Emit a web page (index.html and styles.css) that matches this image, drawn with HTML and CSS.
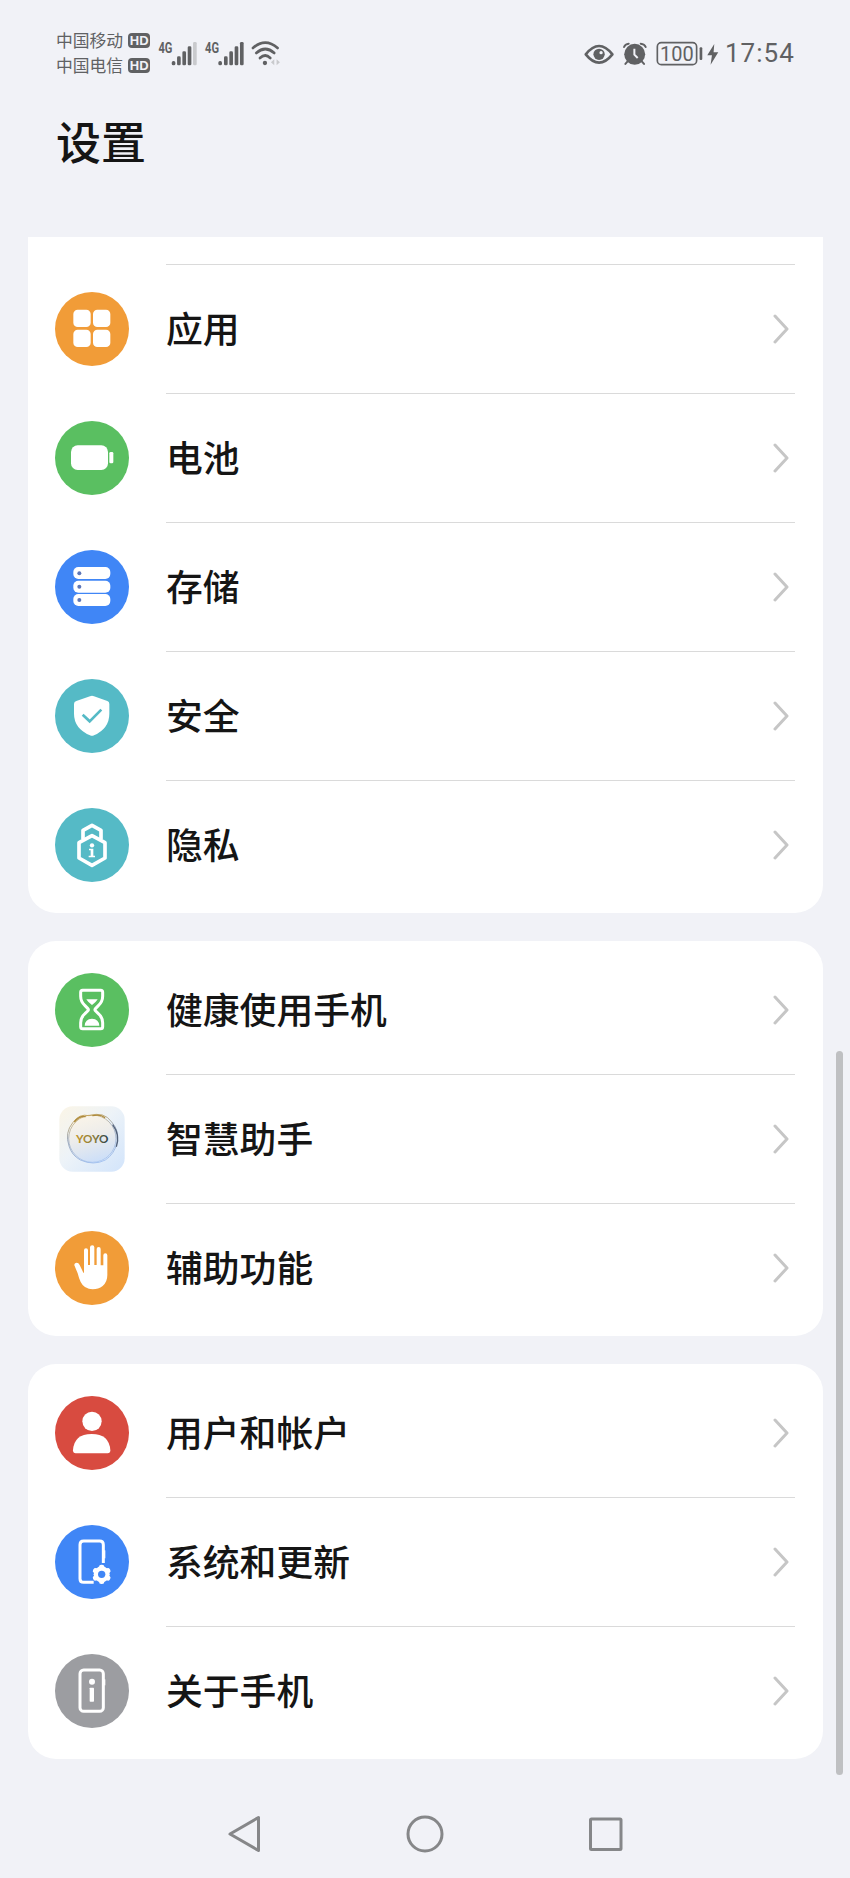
FILE: index.html
```html
<!DOCTYPE html>
<html lang="zh-CN">
<head>
  <meta charset="UTF-8" />
  <meta name="viewport" content="width=device-width, initial-scale=1.0"/>
  <title>设置</title>
  <link rel="stylesheet" href="styles.css">
</head>
<body>
  <div class="status-bar">
    <div class="carriers">
      <div class="carrier">中国移动<span class="hd">HD</span></div>
      <div class="carrier">中国电信<span class="hd">HD</span></div>
    </div>
    <svg class="signals" viewBox="350 55 375 85" fill="#606163">
      <text x="354" y="97" font-size="44" textLength="42" lengthAdjust="spacingAndGlyphs">4G</text>
      <rect x="394" y="121" width="11" height="13" rx="5"/>
      <rect x="410" y="107" width="11" height="27" rx="4"/>
      <rect x="426" y="92" width="11" height="42" rx="4"/>
      <rect x="442" y="77" width="11" height="57" rx="4"/>
      <rect x="458" y="64" width="11" height="70" rx="4" fill="#c9cacd"/>
      <text x="494" y="97" font-size="44" textLength="42" lengthAdjust="spacingAndGlyphs">4G</text>
      <rect x="534" y="121" width="11" height="13" rx="5"/>
      <rect x="551" y="107" width="11" height="27" rx="4"/>
      <rect x="567" y="92" width="11" height="42" rx="4"/>
      <rect x="583" y="77" width="11" height="57" rx="4"/>
      <rect x="599" y="64" width="11" height="70" rx="4"/>
      <g fill="none" stroke="#606163" stroke-width="8" stroke-linecap="round">
        <path d="M638 82Q675 50 712 82"/>
        <path d="M648 97Q675 73 702 97"/>
        <path d="M659 112Q675 97 690 112"/>
      </g>
      <circle cx="674" cy="127" r="6.5"/>
      <path d="M702 116v18l-10-9zM709 116v18l10-9z" fill="#c9cacd"/>
    </svg>
    <svg class="indicators" viewBox="40 55 410 85" fill="#606163">
      <path d="M48 101Q88 51 128 101Q88 151 48 101z" fill="none" stroke="#606163" stroke-width="8" stroke-linejoin="round"/>
      <circle cx="88" cy="101" r="17"/>
      <circle cx="94" cy="96" r="5" fill="#f1f2f7"/>
      <circle cx="195" cy="101" r="31.5"/>
      <g fill="none" stroke="#606163" stroke-width="6" stroke-linecap="round">
        <path d="M163 79Q166 70 177 69M213 69Q225 70 228 79M173 123l-6 7M217 123l6 7"/>
      </g>
      <path d="M194 84v18l10 10" fill="none" stroke="#f1f2f7" stroke-width="6"/>
      <rect x="263" y="66" width="118" height="66" rx="12" fill="none" stroke="#606163" stroke-width="5"/>
      <text x="271" y="121" font-size="60" textLength="101" lengthAdjust="spacingAndGlyphs">100</text>
      <rect x="390" y="80" width="8" height="38" rx="3"/>
      <path d="M434 70L413 104H427L423 132L446 95H432z"/>
    </svg>
    <span class="clock">17:54</span>
  </div>

  <h1 class="title">设置</h1>

  <div class="settings">
    <div class="card card-cut">
      <div class="row">
        <svg class="icon" viewBox="0 0 222 222">
          <circle cx="111" cy="111" r="111" fill="#f19c38"/>
          <g fill="#fff">
            <rect x="55" y="53" width="52" height="52" rx="13"/>
            <rect x="114" y="53" width="52" height="52" rx="13"/>
            <rect x="55" y="113" width="52" height="52" rx="13"/>
            <rect x="114" y="113" width="52" height="52" rx="13"/>
          </g>
        </svg>
        <div class="item"><span>应用</span><svg class="arrow" viewBox="0 0 18 30"><path d="M3 2L15 15L3 28"/></svg></div>
      </div>
      <div class="row">
        <svg class="icon" viewBox="0 0 222 222">
          <circle cx="111" cy="111" r="111" fill="#5abf61"/>
          <rect x="48" y="73" width="111" height="74" rx="20" fill="#fff"/>
          <rect x="163" y="93" width="12" height="34" rx="4" fill="#fff"/>
        </svg>
        <div class="item"><span>电池</span><svg class="arrow" viewBox="0 0 18 30"><path d="M3 2L15 15L3 28"/></svg></div>
      </div>
      <div class="row">
        <svg class="icon" viewBox="0 0 222 222">
          <circle cx="111" cy="111" r="111" fill="#4086f6"/>
          <g fill="#fff">
            <rect x="55" y="51" width="111" height="36" rx="15"/>
            <rect x="55" y="92" width="111" height="36" rx="15"/>
            <rect x="55" y="132" width="111" height="36" rx="15"/>
          </g>
          <g fill="#5d76b8">
            <circle cx="73" cy="70" r="6"/>
            <circle cx="73" cy="110" r="6"/>
            <circle cx="73" cy="150" r="6"/>
          </g>
        </svg>
        <div class="item"><span>存储</span><svg class="arrow" viewBox="0 0 18 30"><path d="M3 2L15 15L3 28"/></svg></div>
      </div>
      <div class="row">
        <svg class="icon" viewBox="0 0 222 222">
          <circle cx="111" cy="111" r="111" fill="#55bac6"/>
          <path d="M105 52Q111 49 117 52L157 66Q163 68 163 75V104Q163 148 117 169Q111 172 105 169Q57 148 57 104V75Q57 68 64 66z" fill="#fff"/>
          <path d="M83 107L104 127L139 92" fill="none" stroke="#55bac6" stroke-width="8"/>
        </svg>
        <div class="item"><span>安全</span><svg class="arrow" viewBox="0 0 18 30"><path d="M3 2L15 15L3 28"/></svg></div>
      </div>
      <div class="row">
        <svg class="icon" viewBox="0 0 222 222">
          <circle cx="111" cy="111" r="111" fill="#55bac6"/>
          <g fill="none" stroke="#fff" stroke-width="11" stroke-linejoin="round">
            <path d="M84 94V67L111 52L138 67V94"/>
            <path d="M72 104L111 83L150 104V150L111 172L72 150z"/>
          </g>
          <circle cx="111" cy="112" r="6.5" fill="#fff"/>
          <path d="M102 122H115V143H120V148H101V143H107V127H102z" fill="#fff"/>
        </svg>
        <div class="item"><span>隐私</span><svg class="arrow" viewBox="0 0 18 30"><path d="M3 2L15 15L3 28"/></svg></div>
      </div>
    </div>

    <div class="card">
      <div class="row">
        <svg class="icon" viewBox="0 0 222 222">
          <circle cx="111" cy="111" r="111" fill="#5abf61"/>
          <path d="M83 52H137Q143 52 143 58V70Q143 86 130 98L122 106Q118 110 122 114L130 122Q143 133 143 149V161Q143 167 137 167H83Q77 167 77 161V149Q77 133 90 122L98 114Q102 110 98 106L90 98Q77 86 77 70V58Q77 52 83 52z" fill="none" stroke="#fff" stroke-width="9"/>
          <path d="M94 79H128Q125 85 111 96Q97 85 94 79zM89 158Q90 138 111 137Q132 138 133 158z" fill="#fff"/>
        </svg>
        <div class="item"><span>健康使用手机</span><svg class="arrow" viewBox="0 0 18 30"><path d="M3 2L15 15L3 28"/></svg></div>
      </div>
      <div class="row">
        <svg class="icon" viewBox="0 0 222 222">
          <defs>
            <linearGradient id="tile" x1="0" y1="0" x2="1" y2="1">
              <stop offset="0" stop-color="#fbf5e6"/>
              <stop offset="0.45" stop-color="#edf3f8"/>
              <stop offset="1" stop-color="#d2e4fb"/>
            </linearGradient>
            <linearGradient id="ring" x1="0.3" y1="0" x2="0.6" y2="1">
              <stop offset="0" stop-color="#c69f4a"/>
              <stop offset="0.4" stop-color="#8f9cb0"/>
              <stop offset="1" stop-color="#9bbcef"/>
            </linearGradient>
            <linearGradient id="ball" x1="0.2" y1="0" x2="0.5" y2="1">
              <stop offset="0" stop-color="#fbf5e8"/>
              <stop offset="0.5" stop-color="#ececeb"/>
              <stop offset="1" stop-color="#cddff8"/>
            </linearGradient>
            <linearGradient id="yoyo">
              <stop offset="0" stop-color="#c29428"/>
              <stop offset="0.6" stop-color="#877b3c"/>
              <stop offset="1" stop-color="#263b46"/>
            </linearGradient>
          </defs>
          <rect x="13" y="13" width="196" height="196" rx="40" fill="url(#tile)"/>
          <circle cx="112" cy="110" r="71" fill="url(#ball)" stroke="url(#ring)" stroke-width="2"/>
          <path d="M42 132Q28 92 54 61Q73 34 102 41Q147 27 170 60Q195 88 186 123Q178 156 151 174Q116 192 76 174Q50 160 42 132z" fill="none" stroke="url(#ring)" stroke-width="2.5"/>
          <path d="M173 68Q196 99 184 134" fill="none" stroke="#526078" stroke-width="4"/>
          <path d="M58 60Q72 41 92 44M112 41Q137 36 150 47" fill="none" stroke="#ae8b3d" stroke-width="4"/>
          <text class="yoyo" x="63" y="123" font-size="35" textLength="97" lengthAdjust="spacingAndGlyphs" fill="url(#yoyo)">YOYO</text>
        </svg>
        <div class="item"><span>智慧助手</span><svg class="arrow" viewBox="0 0 18 30"><path d="M3 2L15 15L3 28"/></svg></div>
      </div>
      <div class="row">
        <svg class="icon" viewBox="0 0 222 222">
          <circle cx="111" cy="111" r="111" fill="#f19c38"/>
          <path d="M87 125V58Q87 52 93 52Q99 52 99 58V102H105V49Q105 43 112 43Q118 43 118 49V102H125V54Q125 48 131 48Q137 48 137 54V103H145V73Q145 67 151 67Q157 67 157 73V132Q157 153 143 165Q130 175 113 175Q88 175 77 153Q72 143 68 127L59 105Q56 98 62 96Q70 94 74 102L85 125z" fill="#fff"/>
        </svg>
        <div class="item"><span>辅助功能</span><svg class="arrow" viewBox="0 0 18 30"><path d="M3 2L15 15L3 28"/></svg></div>
      </div>
    </div>

    <div class="card">
      <div class="row">
        <svg class="icon" viewBox="0 0 222 222">
          <circle cx="111" cy="111" r="111" fill="#d84b40"/>
          <circle cx="111" cy="76" r="29" fill="#fff"/>
          <path d="M62 172Q54 172 54 163Q57 114 110 114Q163 114 166 163Q166 172 158 172z" fill="#fff"/>
        </svg>
        <div class="item"><span>用户和帐户</span><svg class="arrow" viewBox="0 0 18 30"><path d="M3 2L15 15L3 28"/></svg></div>
      </div>
      <div class="row">
        <svg class="icon" viewBox="0 0 222 222">
          <circle cx="111" cy="111" r="111" fill="#4086f6"/>
          <path d="M116 172H86Q75 172 75 161V59Q75 48 86 48H134Q145 48 145 59V114" fill="none" stroke="#fff" stroke-width="9"/>
          <path d="M148 76V100" stroke="#fff" stroke-width="6"/>
          <g fill="#fff">
            <circle cx="140" cy="148" r="24"/>
            <rect x="132" y="119" width="16" height="58" rx="7"/>
            <rect x="132" y="119" width="16" height="58" rx="7" transform="rotate(60 140 148)"/>
            <rect x="132" y="119" width="16" height="58" rx="7" transform="rotate(120 140 148)"/>
          </g>
          <circle cx="140" cy="148" r="11" fill="#4086f6"/>
        </svg>
        <div class="item"><span>系统和更新</span><svg class="arrow" viewBox="0 0 18 30"><path d="M3 2L15 15L3 28"/></svg></div>
      </div>
      <div class="row">
        <svg class="icon" viewBox="0 0 222 222">
          <circle cx="111" cy="111" r="111" fill="#9c9da1"/>
          <rect x="75" y="48" width="70" height="124" rx="11" fill="none" stroke="#fff" stroke-width="9"/>
          <path d="M148 76V94" stroke="#fff" stroke-width="6"/>
          <circle cx="111" cy="83" r="9" fill="#fff"/>
          <rect x="104" y="101" width="13" height="42" rx="2" fill="#fff"/>
        </svg>
        <div class="item"><span>关于手机</span><svg class="arrow" viewBox="0 0 18 30"><path d="M3 2L15 15L3 28"/></svg></div>
      </div>
    </div>
  </div>

  <div class="scrollbar"></div>

  <div class="nav-bar">
    <svg viewBox="0 0 40 40"><path d="M34.500 3.500V36.500L6 20z"/></svg>
    <svg viewBox="0 0 40 40"><circle cx="20" cy="20" r="17"/></svg>
    <svg viewBox="0 0 40 40"><rect x="4.500" y="5" width="30.500" height="30.500" rx="1"/></svg>
  </div>
</body>
</html>
```
FILE: styles.css
```css
* {
  box-sizing: border-box;
}
body {
  position: relative;
  margin: 0;
  width: 850px;
  height: 1878px;
  overflow: hidden;
  background-color: #f1f2f7;
  color: #151515;
  font-family: "Noto Sans CJK SC", sans-serif;
}
svg {
  display: block;
  flex: none;
}

/* status bar */
.status-bar {
  display: flex;
  align-items: center;
  height: 80px;
  padding: 26px 54px 0 56px;
  color: #606163;
}
.carriers {
  width: 95px;
}
.carrier {
  display: flex;
  align-items: center;
  gap: 5px;
  height: 25.500px;
  font-size: 16.800px;
  line-height: 25.500px;
  white-space: nowrap;
}
.hd {
  width: 22px;
  height: 15px;
  border-radius: 4px;
  background-color: #606163;
  color: #f1f2f7;
  font: bold 13px/15px "Liberation Sans", sans-serif;
  text-align: center;
}
.signals {
  width: 125px;
  height: 28.300px;
  margin-left: 5.700px;
  font-family: Roboto, sans-serif;
  font-weight: bold;
}
.indicators {
  width: 136.700px;
  height: 28.300px;
  margin-left: auto;
  font-family: Roboto, sans-serif;
}
.clock {
  width: 71px;
  margin-left: 5px;
  font: 26px/30px Roboto, sans-serif;
  letter-spacing: 1px;
  white-space: nowrap;
}

.title {
  height: 157px;
  margin: 0;
  padding: 28px 0 0 56px;
  font-size: 45px;
  font-weight: 500;
  line-height: 66px;
}

/* setting groups */
.settings {
  display: flex;
  flex-direction: column;
  gap: 28px;
  padding: 0 27.500px;
}
.card {
  padding: 4.200px 27.500px;
  border-radius: 28px;
  background-color: #fff;
}
.card-cut {
  padding-top: 27.400px;
  border-radius: 0 0 28px 28px;
}
.row {
  display: flex;
  align-items: center;
  gap: 37px;
  height: 128.860px;
}
.icon {
  width: 74px;
  height: 74px;
  margin-top: 1px;
}
.item {
  display: flex;
  flex: 1;
  align-items: center;
  justify-content: space-between;
  height: 100%;
  padding-right: 5.500px;
  border-top: 1px solid #dadada;
  font-size: 36.800px;
  font-weight: 500;
  line-height: 54px;
}
.item span {
  padding-bottom: 4px;
}
.card:not(.card-cut) .row:first-child .item {
  border-top-color: transparent;
}
.arrow {
  width: 18px;
  height: 30px;
  fill: none;
  stroke: #c6c6c6;
  stroke-width: 3;
  stroke-linecap: round;
  stroke-linejoin: round;
}
.yoyo {
  font-family: Lato, sans-serif;
  font-weight: bold;
}

.scrollbar {
  position: absolute;
  top: 1051px;
  right: 7px;
  width: 7px;
  height: 724px;
  border-radius: 4px;
  background-color: #bfc0c2;
}

.nav-bar {
  display: flex;
  justify-content: space-between;
  padding: 55px 224px 0 223.500px;
}
.nav-bar svg {
  width: 40px;
  height: 40px;
  fill: none;
  stroke: #868789;
  stroke-width: 3;
  stroke-linejoin: round;
}
```
